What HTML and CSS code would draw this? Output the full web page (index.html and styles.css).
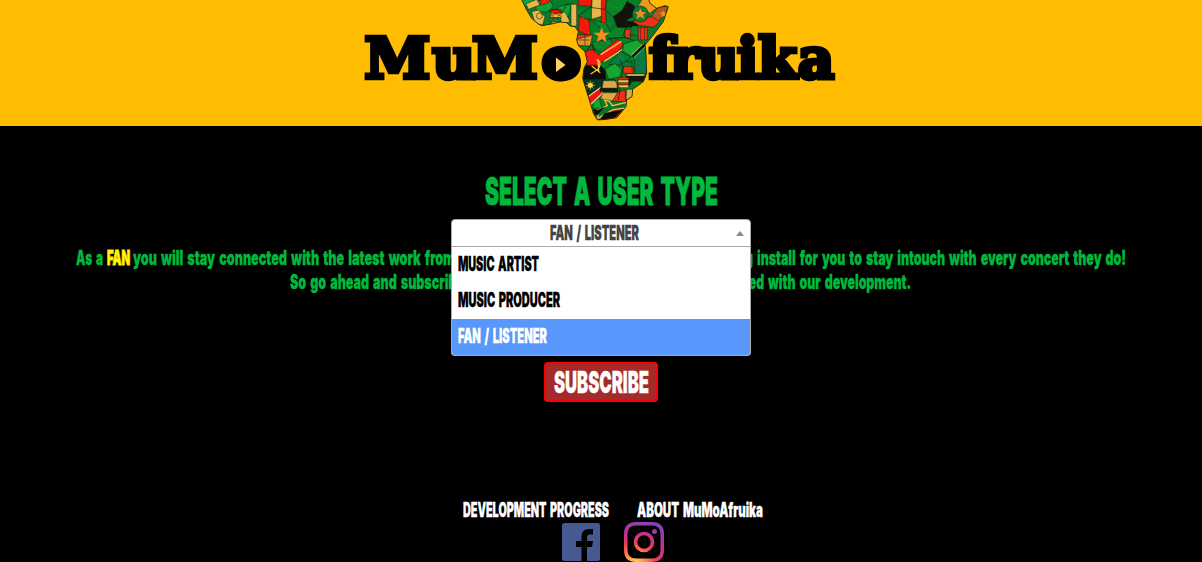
FILE: index.html
```html
<!DOCTYPE html>
<html lang="en">
<head>
<meta charset="utf-8">
<title>MuMoAfruika</title>
<link rel="stylesheet" href="styles.css">
</head>
<body>
<header class="banner">
<svg class="logo" width="480" height="126" viewBox="361 0 480 126">
  <defs>
    <clipPath id="continent"><path d="M33 -5L50 30 65 55 85 72 95 77 125 72 150 66 170 68 180 78 195 80 205 95 200 120 205 137 225 155 232 185 222 205 218 235 235 290 250 340 262 360 290 358 320 353 348 320 350 300 366 290 368 268 400 245 410 220 408 160 405 135 430 105 460 65 475 20 465 17 440 25 420 10 415 -5Z"/></clipPath>
  </defs>
  <g transform="translate(510 0) scale(.33333)">
    <g clip-path="url(#continent)" stroke="#14190b" stroke-width="1.5">
      <path fill="#087d29" d="M0-5H510V378H0Z"/>
      <path fill="#07a43b" d="M30-5H75L65 20 35 18ZM75 5L118-5 130 20 112 36 80 35ZM145 20L185 10 175 52 135 50Z"/>
      <path fill="#e9b64a" d="M48 12L80-2 90 15 55 28ZM65 35L85 30 105 50 98 75 75 70ZM118 55L165 35 180 65 130 80ZM183 13H200V78H183ZM246-5H285L278 48 244 58Z"/>
      <path fill="#f01808" d="M92-5H125L115 9 90 16ZM122 28H153V40H122ZM205 -5H245V18H205ZM208 48L237 60 242 110 205 93ZM274 -5H288V80H274Z"/>
      <path fill="#f5b52d" d="M122 40H153V53H122Z"/><path fill="#108b30" d="M122 53H153V66H122Z"/>
      <path fill="#b5541a" d="M445 20H480L443 68 418 58Z"/>
      <path fill="#0a8429" d="M293-5H355L338 31 310 51 286 29ZM235 56L290 72 300 95 320 70 348 85 344 112 298 115 270 83ZM248 126L300 118 315 138 275 158 251 145Z"/>
      <path fill="#12130c" d="M310 50L336 32 352 5 374 18 368 50 350 60 366 82H322ZM350 64H385V78H350Z"/>
      <path fill="#ef9820" d="M398-5H420L443 22 420 40 382 22Z"/>
      <path fill="#f03015" d="M367 63L425 50 450 65 430 82 386 76ZM385 82H412V120H385ZM198 104H236V118H200ZM345 88H362V114H345Z"/>
      <circle cx="391" cy="42" r="24" fill="#087c38"/>
      <path fill="#f58a1d" stroke="none" d="M391 25l5 11h12l-9 8 4 13-12-7-12 7 4-13-9-8h12ZM275 81l6 17h18l-14 11 5 18-15-10-15 10 5-18-14-11h18ZM461 30l3 8h8l-6 6 2 8-7-4-8 4 2-8-6-6h8Z"/>
      <path fill="#e8902a" d="M200 118L248 105 240 138 203 136Z"/>
      <path fill="#ff1614" d="M224 154L252 148 265 165 323 118 340 134 328 151 277 184 270 195 231 196Z"/>
      <path fill="none" stroke="#f4bd38" stroke-width="5" d="M272 164L334 124M282 184L337 149"/>
      <path fill="#087b43" d="M365 170L409 138V222L375 222 373 178ZM333 153L363 172 330 195 296 193Z"/>
      <path fill="#16a52f" d="M342 131L380 120 405 137 365 170 337 153ZM285 207L315 190 335 210 330 230 296 238ZM250 307L268 295 275 323 250 327Z"/>
      <path fill="none" stroke="#0c1009" stroke-width="7" d="M368 170L407 130"/>
      <path fill="none" stroke="#edc45b" stroke-width="2" d="M364 165L402 130M371 174L409 137"/>
      <path fill="#080b07" d="M220 197H272L285 210 288 238 220 240Z"/>
      <path fill="none" stroke="#ffc72b" stroke-width="4" d="M260 178Q278 188 264 208L242 222M245 198L271 218M264 178L266 212"/>
      <path fill="#07351e" d="M218 238H280L278 267 233 294Z"/>
      <g stroke="#f6c62e" stroke-width="2"><path d="M241 242V270M227 256H255M231 246L251 266M231 266L251 246"/><circle cx="241" cy="256" r="7" fill="#ffd637"/></g>
      <path fill="#f90e12" stroke="#ebc681" stroke-width="4" d="M232 292L270 264 278 279 240 315Z"/>
      <path fill="#daaa48" d="M280 242H321V265H276ZM278 278H324L308 303 272 296ZM350 268H368V298H348Z"/>
      <path fill="#17170d" d="M270 265H324V275H270ZM348 227H410V244H366L356 260Z"/>
      <path fill="#f6d06b" d="M350 222H404V228H350Z"/>
      <path fill="#f03013" d="M324 233H356V240H324ZM324 248H356V255H324ZM324 276L345 270 347 305 307 304ZM339 200H370V220H339Z"/>
      <path fill="#f3c442" d="M324 240H356V248H324ZM324 255H356V263H324Z"/>
      <path fill="#e92b17" d="M268 344L318 315 340 333 310 362 267 360Z"/>
      <path fill="#08752b" stroke="#eebd42" stroke-width="4" d="M263 330L292 317 284 300 298 304 307 317 349 307V324L309 329 264 355Z"/>
      <path fill="#060b06" d="M251 328L263 331 283 321 263 344 253 344ZM284 340L339 329 315 352 270 360Z"/>
      <path fill="none" stroke-width="2" d="M112 35L138 27 156 38 170 12 182 15M205 47L240 22 285 28M340 45L350 79 338 107M296 117L347 112 372 122M231 152L245 132 253 157M330 180L340 204 334 231M280 240L313 238 330 266 325 301M349 300L352 323"/>
      <path fill="none" stroke="#e5a335" stroke-width="2" stroke-dasharray="3 7" opacity=".75" d="M52 8L81 28 105 2 137 55M207 35L239 81 235 128M254 43L265 69 301 72M290 9L323 25 344 10M215 111L271 141M311 132L338 180 370 210M304 206L324 225M282 289L323 289M376 98L407 109M413 42L455 38"/>
      <g fill="none"><circle cx="88" cy="48" r="9"/><path d="M137 37l4 8h9l-7 6 3 8-9-5-9 5 3-8-7-6h9ZM392 82V120M403 82V120M355 105H382M206 120H238M225 103V136M343 185H366V214"/></g>
    </g>
    <path fill="none" stroke="#211b10" stroke-width="2.500" d="M33 -5L50 30 65 55 85 72 95 77 125 72 150 66 170 68 180 78 195 80 205 95 200 120 205 137 225 155 232 185 222 205 218 235 235 290 250 340 262 360 290 358 320 353 348 320 350 300 366 290 368 268 400 245 410 220 408 160 405 135 430 105 460 65 475 20 465 17 440 25 420 10 415 -5"/>
  </g>
  <g transform="translate(364.500 0) scale(1.060 1)"><text class="wordmark" y="78" x="0 64 101.500 167">MuMo</text></g>
  <text class="wordmark" y="78" x="649 670 698 737 758 798">fruika</text>
  <ellipse cx="560" cy="64" rx="18" ry="17.5"/>
  <path fill="#ffd06a" d="M556 57.5L565.500 65 556 72Z"/>
</svg>
</header>

<main class="signup">
  <h1 class="title"><svg width="233" height="32"><text class="heavy" y="30" textLength="233" lengthAdjust="spacingAndGlyphs">SELECT A USER TYPE</text></svg></h1>
  <div class="picker">
    <div class="picker-value">
      <svg width="89" height="20"><text class="heavy" y="17" textLength="89" lengthAdjust="spacingAndGlyphs">FAN / LISTENER</text></svg>
      <i class="caret"></i>
    </div>
    <ul class="options">
      <li class="option"><svg width="81" height="20"><text class="heavy" y="16" textLength="81" lengthAdjust="spacingAndGlyphs">MUSIC ARTIST</text></svg></li>
      <li class="option"><svg width="102" height="20"><text class="heavy" y="16" textLength="102" lengthAdjust="spacingAndGlyphs">MUSIC PRODUCER</text></svg></li>
      <li class="option active"><svg width="89" height="20"><text class="heavy" y="16" textLength="89" lengthAdjust="spacingAndGlyphs">FAN / LISTENER</text></svg></li>
    </ul>
  </div>
  <p class="pitch">
    <svg width="1050" height="24" viewBox="76 0 1050 24">
      <text class="heavy" x="76" y="18" textLength="27" lengthAdjust="spacingAndGlyphs">As a</text>
      <text class="heavy fan" x="107" y="18" textLength="23" lengthAdjust="spacingAndGlyphs">FAN</text>
      <text class="heavy" x="133" y="18" textLength="322" lengthAdjust="spacingAndGlyphs">you will stay connected with the latest work from</text>
      <text class="heavy" x="718" y="18" textLength="35" lengthAdjust="spacingAndGlyphs">being</text>
      <text class="heavy" x="757" y="18" textLength="369" lengthAdjust="spacingAndGlyphs">install for you to stay intouch with every concert they do!</text>
    </svg>
    <svg width="622" height="24" viewBox="290 0 622 24">
      <text class="heavy" x="290" y="18" textLength="174" lengthAdjust="spacingAndGlyphs">So go ahead and subscribe</text>
      <text class="heavy" x="708" y="18" textLength="56" lengthAdjust="spacingAndGlyphs">informed</text>
      <text class="heavy" x="768" y="18" textLength="143" lengthAdjust="spacingAndGlyphs">with our development.</text>
    </svg>
  </p>
  <button class="subscribe"><svg width="95" height="26"><text class="heavy" y="24" textLength="95" lengthAdjust="spacingAndGlyphs">SUBSCRIBE</text></svg></button>
</main>

<footer class="footer">
  <nav class="links">
    <a><svg width="146" height="20"><text class="heavy" y="16" textLength="146" lengthAdjust="spacingAndGlyphs">DEVELOPMENT PROGRESS</text></svg></a>
    <a><svg width="126" height="20"><text class="heavy" y="16" textLength="126" lengthAdjust="spacingAndGlyphs">ABOUT MuMoAfruika</text></svg></a>
  </nav>
  <div class="social">
    <svg width="38" height="38" viewBox="0 0 38 38"><rect width="38" height="38" rx="2.5" fill="#475993"/><path d="M19.5 38V24H14V18h5.500V13.500Q19.500 6 27 6H31v5.500H28Q25 11.500 25 14.500V18h6l-1 6H25V38Z"/></svg>
    <svg width="40" height="40" viewBox="0 0 40 40"><defs><radialGradient id="ig" cx=".28" cy="1.02" r="1.1"><stop stop-color="#ffd04a"/><stop offset=".2" stop-color="#ff9b3d"/><stop offset=".46" stop-color="#ed3e57"/><stop offset=".7" stop-color="#c82e92"/><stop offset="1" stop-color="#7e43bd"/></radialGradient></defs><path fill="url(#ig)" fill-rule="evenodd" d="M12 0H28Q40 0 40 12V28Q40 40 28 40H12Q0 40 0 28V12Q0 0 12 0ZM12 3.500Q3.500 3.500 3.500 12V28Q3.500 36.500 12 36.500H28Q36.500 36.500 36.500 28V12Q36.500 3.500 28 3.500ZM20 9.700A10.300 10.300 0 1 1 20 30.300A10.300 10.300 0 1 1 20 9.700ZM20 13.300A6.700 6.700 0 1 0 20 26.700A6.700 6.700 0 1 0 20 13.300ZM30.500 7A2.500 2.500 0 1 1 30.500 12A2.500 2.500 0 1 1 30.500 7Z"/></svg>
  </div>
</footer>
</body>
</html>
```

FILE: styles.css
```css
* { box-sizing: border-box; }
body { margin: 0; height: 562px; overflow: hidden; background: #000; color: #00b93c; font-family: Inter, "Liberation Sans", sans-serif; }
svg { display: block; overflow: visible; }
.banner { height: 126px; background: #ffbc00; overflow: hidden; }
.logo { margin-left: 361px; }
.wordmark { font: bold 56px "DejaVu Serif", serif; stroke: #000; stroke-width: 4.5px; }
.heavy { font-family: Inter, sans-serif; font-weight: 900; font-size: 19.5px; word-spacing: .13em; fill: currentColor; stroke: currentColor; stroke-width: .3px; }
.signup { display: flex; flex-direction: column; align-items: center; padding-top: 49px; }
.title { margin: 0 0 12px; }
.title .heavy { font-size: 38.5px; stroke-width: .8px; }
.picker { position: relative; z-index: 1; width: 300px; height: 28px; }
.picker-value { display: flex; justify-content: center; align-items: center; height: 28px; padding-right: 13px; background: #fff; color: #444; border: 1px solid #aaa; border-radius: 4px 4px 0 0; }
.caret { position: absolute; right: 7px; top: 12px; border: 4px solid transparent; border-top: 0; border-bottom: 5px solid #888; }
.options { position: absolute; top: 28px; left: 0; width: 300px; margin: 0; padding: 0; list-style: none; color: #000; background: #fff; border: 1px solid #aaa; border-top: 0; border-radius: 0 0 4px 4px; overflow: hidden; }
.option { height: 36px; padding: 8px 6px; }
.active { background: #5897fb; color: #fff; }
.pitch { margin: 0; display: flex; flex-direction: column; align-items: center; }
.pitch .heavy { font-size: 19.8px; }
.pitch .fan { fill: #ff0; stroke: #ffe000; stroke-width: 1px; }
.subscribe { margin-top: 67px; width: 114px; height: 40px; padding: 0; display: flex; justify-content: center; align-items: center; background: #a52a2a; color: #fff; border: 2px solid #f00; border-radius: 4px; }
.subscribe .heavy { font-size: 30px; }
.footer { margin-top: 99px; color: #fff; }
.links { display: flex; gap: 28px; padding-left: 463px; }
.social { display: flex; align-items: center; gap: 24px; padding-left: 562px; margin-top: 1px; }
```
